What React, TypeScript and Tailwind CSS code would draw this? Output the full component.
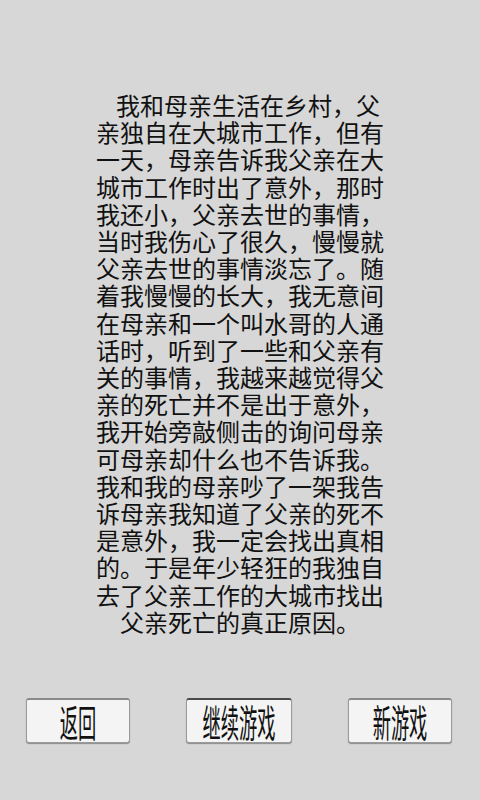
import React from "react";

const lines = [
  "我和母亲生活在乡村，父",
  "亲独自在大城市工作，但有",
  "一天，母亲告诉我父亲在大",
  "城市工作时出了意外，那时",
  "我还小，父亲去世的事情，",
  "当时我伤心了很久，慢慢就",
  "父亲去世的事情淡忘了。随",
  "着我慢慢的长大，我无意间",
  "在母亲和一个叫水哥的人通",
  "话时，听到了一些和父亲有",
  "关的事情，我越来越觉得父",
  "亲的死亡并不是出于意外，",
  "我开始旁敲侧击的询问母亲",
  "可母亲却什么也不告诉我。",
  "我和我的母亲吵了一架我告",
  "诉母亲我知道了父亲的死不",
  "是意外，我一定会找出真相",
  "的。于是年少轻狂的我独自",
  "去了父亲工作的大城市找出",
  "父亲死亡的真正原因。",
];

function Btn({ label, dark, w }: { label: string; dark?: boolean; w: string }) {
  return (
    <div
      className={`${w} h-[45px] rounded-[3px] bg-[#f4f4f4] border border-[#9a9a9a] ${
        dark ? "border-t-[2px] border-t-[#4a4a4a]" : "border-t-[2px] border-t-[#8a8a8a]"
      } shadow-[0_1px_1px_rgba(0,0,0,0.35)] flex items-center justify-center`}
    >
      <div className="w-0 flex justify-center">
        <span className="text-[38px] leading-none text-[#111] scale-x-[0.48] whitespace-nowrap inline-block">
          {label}
        </span>
      </div>
    </div>
  );
}

export default function App() {
  return (
    <div
      className="w-[480px] h-[800px] bg-[#d7d7d7] flex flex-col"
      style={{ fontFamily: '"Noto Sans CJK SC", "Noto Sans", sans-serif' }}
    >
      <div className="w-[288px] mx-auto mt-[91px] text-[24px] leading-[27.2px] text-[#111] text-center">
        {lines.map((l, i) => (
          <div key={i} className={`whitespace-nowrap ${i === 0 ? "pl-4" : ""}`}>
            {l}
          </div>
        ))}
      </div>
      <div className="mt-[63px] flex justify-between pl-[26px] pr-[28px]">
        <Btn label="返回" w="w-[104px]" />
        <Btn label="继续游戏" dark w="w-[106px]" />
        <Btn label="新游戏" w="w-[104px]" />
      </div>
    </div>
  );
}
